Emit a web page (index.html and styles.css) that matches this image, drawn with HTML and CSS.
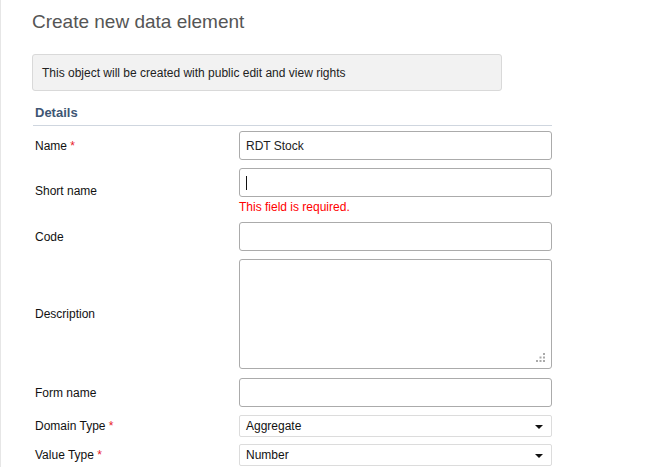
FILE: index.html
```html
<!DOCTYPE html>
<html>
<head>
<meta charset="utf-8">
<link rel="stylesheet" href="styles.css">
</head>
<body>
<div class="page">
  <h1 class="title">Create new data element</h1>
  <div class="notice">This object will be created with public edit and view rights</div>
  <h2 class="section">Details</h2>
  <div class="form">
    <div class="row">
      <label class="label">Name <span class="req">*</span></label>
      <div class="field"><div class="input">RDT Stock</div></div>
    </div>
    <div class="row">
      <label class="label">Short name</label>
      <div class="field">
        <div class="input"><span class="cursor"></span></div>
        <div class="error">This field is required.</div>
      </div>
    </div>
    <div class="row">
      <label class="label">Code</label>
      <div class="field"><div class="input"></div></div>
    </div>
    <div class="row row-wide">
      <label class="label">Description</label>
      <div class="field">
        <div class="textarea">
          <svg class="grip" width="10" height="10" viewBox="0 0 10 10"><g fill="#aaaaaa"><rect x="7" y="0" width="2" height="2"/><rect x="3.5" y="3.5" width="2" height="2"/><rect x="7" y="3.5" width="2" height="2"/><rect x="0" y="7" width="2" height="2"/><rect x="3.5" y="7" width="2" height="2"/><rect x="7" y="7" width="2" height="2"/></g></svg>
        </div>
      </div>
    </div>
    <div class="row">
      <label class="label">Form name</label>
      <div class="field"><div class="input"></div></div>
    </div>
    <div class="row row-tight">
      <label class="label">Domain Type <span class="req">*</span></label>
      <div class="field"><div class="select">Aggregate<span class="caret"></span></div></div>
    </div>
    <div class="row row-tight">
      <label class="label">Value Type <span class="req">*</span></label>
      <div class="field"><div class="select">Number<span class="caret"></span></div></div>
    </div>
  </div>
</div>
</body>
</html>
```

FILE: styles.css
```css
html, body {
  margin: 0;
  padding: 0;
  background: #fff;
}
body {
  font-family: "Liberation Sans", Arial, sans-serif;
  font-size: 12px;
  color: #222;
}
.page {
  border-left: 1px solid #e6e6e6;
  min-height: 467px;
  box-sizing: border-box;
  padding: 0 0 0 31px;
}
.title {
  margin: 0;
  padding-top: 11px;
  font-size: 19px;
  line-height: 22px;
  font-weight: normal;
  color: #555;
}
.notice {
  margin-top: 21px;
  width: 470px;
  height: 37px;
  box-sizing: border-box;
  background: #f2f2f2;
  border: 1px solid #d9d9d9;
  border-radius: 3px;
  padding: 0 9px;
  display: flex;
  align-items: center;
  color: #222;
}
.section {
  margin: 14px 0 0 1px;
  width: 519px;
  padding: 0 0 4px 2px;
  box-sizing: border-box;
  font-size: 13px;
  line-height: 16px;
  font-weight: bold;
  color: #3e5674;
  border-bottom: 1px solid #cfd6df;
}
.form {
  margin-top: 5px;
  margin-left: 1px;
  width: 519px;
}
.row {
  display: grid;
  grid-template-columns: 206px 313px;
  align-items: center;
  margin-bottom: 8px;
}
.row-wide {
  margin-bottom: 9px;
}
.row-tight {
  margin-bottom: 7px;
}
.label {
  padding-left: 2px;
  color: #111;
}
.req {
  color: #e8202a;
}
.input {
  height: 29px;
  box-sizing: border-box;
  border: 1px solid #ababab;
  border-radius: 3px;
  padding: 0 6px;
  display: flex;
  align-items: center;
  color: #222;
}
.cursor {
  display: inline-block;
  width: 1px;
  height: 14px;
  background: #111;
}
.error {
  margin-top: 3px;
  height: 14px;
  line-height: 14px;
  color: #ff0000;
}
.textarea {
  position: relative;
  height: 110px;
  box-sizing: border-box;
  border: 1px solid #ababab;
  border-radius: 3px;
}
.grip {
  position: absolute;
  right: 5px;
  bottom: 5px;
}
.select {
  position: relative;
  height: 22px;
  box-sizing: border-box;
  border: 1px solid #dcdcdc;
  border-radius: 2px;
  padding: 0 6px;
  display: flex;
  align-items: center;
  color: #111;
}
.caret {
  position: absolute;
  right: 8px;
  top: 9px;
  width: 0;
  height: 0;
  border-left: 4px solid transparent;
  border-right: 4px solid transparent;
  border-top: 4px solid #111;
}
```
